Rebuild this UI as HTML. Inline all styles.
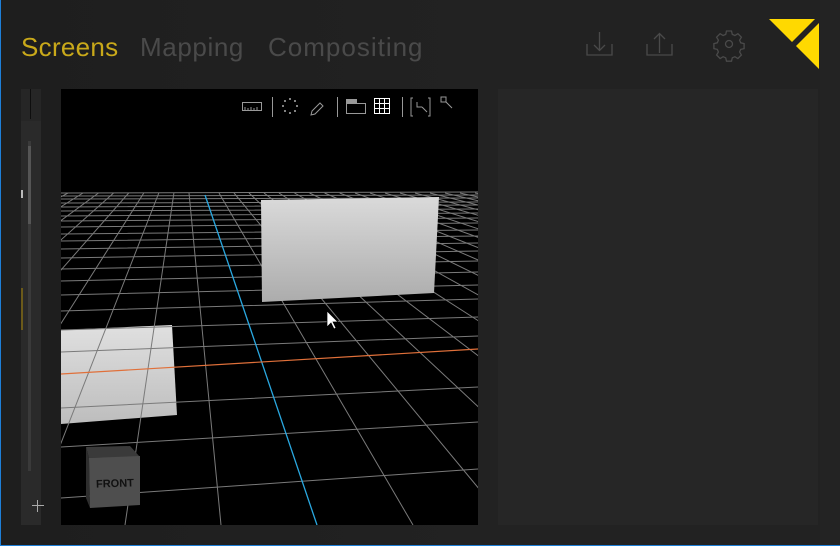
<!DOCTYPE html>
<html><head><meta charset="utf-8"><style>
html,body{margin:0;padding:0}
body{width:840px;height:546px;background:#1f1f1f;position:relative;overflow:hidden;font-family:"Liberation Sans",sans-serif}
.blue{position:absolute;background:#1e7fd8}
.tab{position:absolute;top:32px;font-size:26px}
</style></head><body>
<div style="position:absolute;left:0;top:0;width:840px;height:546px;background:linear-gradient(90deg,#1e1e1e,#222 60%,#222)"></div>
<div style="position:absolute;left:820px;top:0;width:20px;height:546px;background:#232323"></div>
<div class="blue" style="left:0;top:0;width:1px;height:546px"></div>
<div class="blue" style="left:0;top:545px;width:840px;height:1px"></div>

<div class="tab" style="left:21px;color:#c9a91a;letter-spacing:0.3px">Screens</div>
<div class="tab" style="left:140px;color:#4a4a4a;letter-spacing:0.6px">Mapping</div>
<div class="tab" style="left:268px;color:#4a4a4a;letter-spacing:1px">Compositing</div>

<svg style="position:absolute;left:0;top:0" width="840" height="90">
 <g stroke="#4a4a4a" stroke-width="1.3" fill="none">
  <path d="M587 44v11h25v-11M599.5 32v18M594 45l5.5 5.5 5.5-5.5"/>
  <path d="M647 44v11h25v-11M659.5 34v19M654 39l5.5-5.5 5.5 5.5"/>
  <circle cx="729" cy="44" r="3.5"/>
  <path d="M726.5 31h5l.8 3.4 2.6 1.1 3-1.8 3.5 3.5-1.8 3 1.1 2.6 3.4.8v5l-3.4.8-1.1 2.6 1.8 3-3.5 3.5-3-1.8-2.6 1.1-.8 3.4h-5l-.8-3.4-2.6-1.1-3 1.8-3.5-3.5 1.8-3-1.1-2.6-3.4-.8v-5l3.4-.8 1.1-2.6-1.8-3 3.5-3.5 3 1.8 2.6-1.1z"/>
 </g>
 <polygon points="769,19 815,19 792,42" fill="#ffd900"/>
 <polygon points="819,23 819,69 796,46" fill="#ffd900"/>
</svg>

<div style="position:absolute;left:21px;top:89px;width:20px;height:32px;background:#262626"></div>
<div style="position:absolute;left:30px;top:89px;width:1px;height:30px;background:#0e0e0e"></div>
<div style="position:absolute;left:21px;top:121px;width:20px;height:404px;background:#2a2a2a"></div>
<div style="position:absolute;left:28px;top:141px;width:3px;height:330px;background:#3a3a3a"></div>
<div style="position:absolute;left:28px;top:146px;width:3px;height:78px;background:#555"></div>
<div style="position:absolute;left:21px;top:190px;width:2px;height:8px;background:#bbb"></div>
<div style="position:absolute;left:21px;top:288px;width:2px;height:42px;background:#6b5a1a"></div>
<div style="position:absolute;left:32px;top:505px;width:12px;height:1px;background:#aaa"></div>
<div style="position:absolute;left:37px;top:500px;width:1px;height:12px;background:#aaa"></div>

<div style="position:absolute;left:498px;top:89px;width:320px;height:436px;background:#262626"></div>

<svg style="position:absolute;left:61px;top:89px;background:#000" width="417" height="436" viewBox="61 89 417 436">
 <defs>
  <linearGradient id="g1" x1="0" y1="0" x2="0" y2="1"><stop offset="0" stop-color="#dadada"/><stop offset="1" stop-color="#acacac"/></linearGradient>
  <linearGradient id="g2" x1="0" y1="0" x2="0" y2="1"><stop offset="0" stop-color="#e0e0e0"/><stop offset="1" stop-color="#bdbdbd"/></linearGradient>
 </defs>
 <polygon points="61,330 172,325 177,415 61,424" fill="url(#g2)"/>
 <g stroke="#7a7a7a" stroke-width="1" fill="none">
  <path d="M61 498L478 469M61 447L478 422M61 408L478 387M61 352L478 336M61 330L478 317M61 311L478 299M61 295L478 285M61 281L478 272M61 269L478 261M61 258L478 251M61 249L478 243M61 241L478 236M61 234L478 230M61 227L478 223M61 221L478 218M61 216L478 213M61 211L478 209M61 207L478 205M61 203L478 202M61 199L478 198M61 196L478 195M61 193L478 192"/>
  <path d="M23 193L-835 525M38 193L-739 525M53 193L-643 525M68 193L-547 525M83 193L-451 525M98.5 193L-355 525M113.6 193L-259 525M128.7 193L-163 525M143.8 193L-67 525M158.8 193L29 525M173.9 193L125 525M189 193L221 525M219 193L413 525M234 193L509 525M249 193L605 525M264 193L701 525M279 193L797 525M294.5 193L893 525M309.6 193L989 525M324.6 193L1085 525M339.7 193L1181 525M355 193L1277 525M370 193L1373 525M385 193L1469 525M400 193L1565 525M415 193L1661 525M430 193L1757 525M445 193L1853 525M460 193L1949 525M475 193L2045 525"/>
 </g>
 <path d="M205 195L317 525" stroke="#2aa8e0" stroke-width="1.3"/>
 <path d="M61 374L478 349" stroke="#e0703a" stroke-width="1.2"/>
 <polygon points="261,200 439,197 434,293 262,302" fill="url(#g1)"/>
 <polygon points="86,447 130,446 140,457 89,458" fill="#3a3a3a"/>
 <polygon points="86,447 89,458 90,508 86,498" fill="#2e2e2e"/>
 <polygon points="89,458 140,456 140,505 90,508" fill="#4e4e4e"/>
 <text x="96" y="487" font-family="Liberation Sans,sans-serif" font-weight="bold" font-size="11" fill="#111" transform="rotate(-2 115 484)">FRONT</text>
 <polygon points="327,311 327,327 331,323 334,329 336,328 333,322 338,322" fill="#fff" stroke="#000" stroke-width="0.7"/>
 <g stroke="#999" fill="none" stroke-width="1">
  <rect x="242.5" y="102.5" width="19" height="8"/>
  <path d="M245 110v-3M248 110v-2M251 110v-3M254 110v-2M257 110v-3"/>
  <path d="M272.5 97v20M337.5 97v20M402.5 97v20"/>
  <path d="M311 115l1-4 8-8 3 3-8 8z"/>
  <rect x="346.5" y="103.5" width="19" height="10"/>
  <rect x="346" y="99" width="11" height="4" fill="#999" stroke="none"/>
  <path d="M413 98h-2v18h2M428 98h2v18h-2M417 102v5h5M422 107l5 5"/>
  <path d="M441 97h5v5h-5zM446 102l6 6"/>
 </g>
 <g fill="#aaa">
  <circle cx="290" cy="99" r="1"/><circle cx="295" cy="101" r="1"/><circle cx="297" cy="106" r="1"/><circle cx="295" cy="111" r="1"/><circle cx="290" cy="113" r="1"/><circle cx="285" cy="111" r="1"/><circle cx="283" cy="106" r="1"/><circle cx="285" cy="101" r="1"/>
 </g>
 <g stroke="#fff" fill="none" stroke-width="1">
  <rect x="374.5" y="98.5" width="15" height="15"/>
  <path d="M379.5 98v16M384.5 98v16M374 103.5h16M374 108.5h16"/>
 </g>
</svg>
</body></html>
